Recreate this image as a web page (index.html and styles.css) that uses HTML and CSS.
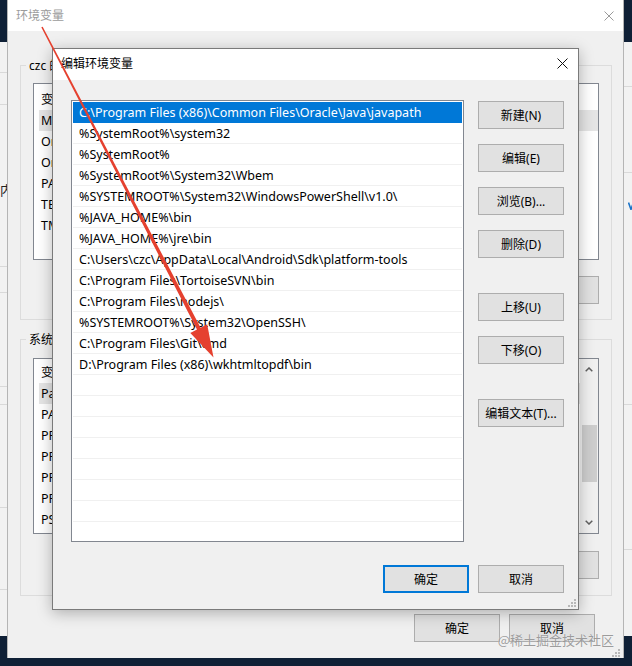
FILE: index.html
```html
<!DOCTYPE html>
<html lang="zh-CN">
<head>
<meta charset="utf-8">
<title>编辑环境变量</title>
<link rel="stylesheet" href="styles.css">
</head>
<body>
<div class="desktop">

  <div class="back-window">
    <div class="bw-col bw-left">
      <div class="bw-seg"></div>
      <div class="bw-seg"></div>
      <div class="bw-seg bw-text">内</div>
      <div class="bw-seg"></div>
      <div class="bw-seg"></div>
      <div class="bw-seg"></div>
      <div class="bw-seg"></div>
      <div class="bw-seg"></div>
      <div class="bw-seg bw-last"></div>
    </div>
    <div class="bw-col bw-right">
      <div class="bw-seg"></div>
      <div class="bw-seg"></div>
      <div class="bw-seg bw-mark"><svg width="6" height="8" viewBox="0 0 6 8"><path d="M0.5 0.5 L3 7.5 L5.5 0.5" fill="none" stroke="#1a73c8" stroke-width="1.6"/></svg></div>
      <div class="bw-seg"></div>
      <div class="bw-seg bw-last"></div>
    </div>
  </div>

  <div class="window env-window">
    <div class="titlebar env-titlebar">
      <span class="title title-inactive">环境变量</span>
      <svg class="close" width="10" height="10" viewBox="0 0 10 10"><path d="M0.5 0.5 L9.5 9.5 M9.5 0.5 L0.5 9.5" stroke="#9a9a9a" stroke-width="1"/></svg>
    </div>
    <div class="env-body">
      <fieldset class="group group-user">
        <legend>czc 的用户变量(U)</legend>
        <div class="listview lv-user">
          <div class="lv-rows">
            <div class="lv-row lv-head"><span class="lv-c1">变量</span><span>值</span></div>
            <div class="lv-row lv-sel"><span class="lv-c1">MAVEN_HOME</span><span>D:\apache-maven-3.6.3</span></div>
            <div class="lv-row"><span class="lv-c1">OneDrive</span><span>C:\Users\czc\OneDrive</span></div>
            <div class="lv-row"><span class="lv-c1">OneDriveConsumer</span><span>C:\Users\czc\OneDrive</span></div>
            <div class="lv-row"><span class="lv-c1">PATH</span><span>C:\Users\czc\AppData\Local\Microsoft\WindowsApps;</span></div>
            <div class="lv-row"><span class="lv-c1">TEMP</span><span>C:\Users\czc\AppData\Local\Temp</span></div>
            <div class="lv-row"><span class="lv-c1">TMP</span><span>C:\Users\czc\AppData\Local\Temp</span></div>
          </div>
        </div>
        <div class="btn-row">
          <button class="btn">新建(N)...</button>
          <button class="btn">编辑(E)...</button>
          <button class="btn">删除(D)</button>
        </div>
      </fieldset>

      <fieldset class="group group-sys">
        <legend>系统变量(S)</legend>
        <div class="listview lv-sys">
          <div class="lv-rows">
            <div class="lv-row lv-head"><span class="lv-c1">变量</span><span>值</span></div>
            <div class="lv-row lv-sel"><span class="lv-c1">Path</span><span>C:\Program Files (x86)\Common Files\Oracle\Java\javapath</span></div>
            <div class="lv-row"><span class="lv-c1">PATHEXT</span><span>.COM;.EXE;.BAT;.CMD;.VBS;.VBE;.JS</span></div>
            <div class="lv-row"><span class="lv-c1">PROCESSOR_ARCHITECTURE</span><span>AMD64</span></div>
            <div class="lv-row"><span class="lv-c1">PROCESSOR_IDENTIFIER</span><span>Intel64 Family 6</span></div>
            <div class="lv-row"><span class="lv-c1">PROCESSOR_LEVEL</span><span>6</span></div>
            <div class="lv-row"><span class="lv-c1">PROCESSOR_REVISION</span><span>9e0a</span></div>
            <div class="lv-row"><span class="lv-c1">PSModulePath</span><span>%ProgramFiles%\WindowsPowerShell\Modules</span></div>
          </div>
          <div class="scrollbar">
            <div class="sb-btn"><svg width="8" height="5" viewBox="0 0 8 5"><path d="M0.7 4.3 L4 1 L7.3 4.3" fill="none" stroke="#606060" stroke-width="1.5"/></svg></div>
            <div class="sb-track"><div class="sb-thumb"></div></div>
            <div class="sb-btn"><svg width="8" height="5" viewBox="0 0 8 5"><path d="M0.7 0.7 L4 4 L7.3 0.7" fill="none" stroke="#606060" stroke-width="1.5"/></svg></div>
          </div>
        </div>
        <div class="btn-row btn-row-sys">
          <button class="btn">新建(W)...</button>
          <button class="btn">编辑(I)...</button>
          <button class="btn">删除(L)</button>
        </div>
      </fieldset>

      <div class="dlg-footer env-footer">
        <button class="btn">确定</button>
        <button class="btn">取消</button>
      </div>
    </div>
    <svg class="grip env-grip" width="8" height="8" viewBox="0 0 8 8"><g fill="#b8b8b8"><rect x="6" y="0" width="2" height="2"/><rect x="3" y="3" width="2" height="2"/><rect x="6" y="3" width="2" height="2"/><rect x="0" y="6" width="2" height="2"/><rect x="3" y="6" width="2" height="2"/><rect x="6" y="6" width="2" height="2"/></g></svg>
  </div>

  <div class="window edit-window">
    <div class="titlebar edit-titlebar">
      <span class="title">编辑环境变量</span>
      <svg class="close" width="11" height="11" viewBox="0 0 11 11"><path d="M0.5 0.5 L10.5 10.5 M10.5 0.5 L0.5 10.5" stroke="#111" stroke-width="1"/></svg>
    </div>
    <div class="edit-body">
      <div class="edit-main">
        <div class="pathlist">
          <div class="path-row path-sel">C:\Program Files (x86)\Common Files\Oracle\Java\javapath</div>
          <div class="path-row">%SystemRoot%\system32</div>
          <div class="path-row">%SystemRoot%</div>
          <div class="path-row">%SystemRoot%\System32\Wbem</div>
          <div class="path-row">%SYSTEMROOT%\System32\WindowsPowerShell\v1.0\</div>
          <div class="path-row">%JAVA_HOME%\bin</div>
          <div class="path-row">%JAVA_HOME%\jre\bin</div>
          <div class="path-row">C:\Users\czc\AppData\Local\Android\Sdk\platform-tools</div>
          <div class="path-row">C:\Program Files\TortoiseSVN\bin</div>
          <div class="path-row">C:\Program Files\nodejs\</div>
          <div class="path-row">%SYSTEMROOT%\System32\OpenSSH\</div>
          <div class="path-row">C:\Program Files\Git\cmd</div>
          <div class="path-row">D:\Program Files (x86)\wkhtmltopdf\bin</div>
          <div class="path-row"></div>
          <div class="path-row"></div>
          <div class="path-row"></div>
          <div class="path-row"></div>
          <div class="path-row"></div>
          <div class="path-row"></div>
          <div class="path-row"></div>
          <div class="path-row"></div>
        </div>
        <div class="side-buttons">
          <button class="btn">新建(N)</button>
          <button class="btn">编辑(E)</button>
          <button class="btn">浏览(B)...</button>
          <button class="btn">删除(D)</button>
          <button class="btn btn-sep">上移(U)</button>
          <button class="btn">下移(O)</button>
          <button class="btn btn-sep">编辑文本(T)...</button>
        </div>
      </div>
      <div class="dlg-footer edit-footer">
        <button class="btn btn-default">确定</button>
        <button class="btn">取消</button>
      </div>
    </div>
    <svg class="grip edit-grip" width="8" height="8" viewBox="0 0 8 8"><g fill="#b8b8b8"><rect x="6" y="0" width="2" height="2"/><rect x="3" y="3" width="2" height="2"/><rect x="6" y="3" width="2" height="2"/><rect x="0" y="6" width="2" height="2"/><rect x="3" y="6" width="2" height="2"/><rect x="6" y="6" width="2" height="2"/></g></svg>
  </div>

  <svg class="arrow" width="632" height="666" viewBox="0 0 632 666">
    <polygon fill="#e5412f" points="42.7,26.7 200.6,327.7 207.2,324.2 213.5,357.5 190.3,333 197,329.5 41.3,27.3"/>
  </svg>

  <div class="watermark">@稀土掘金技术社区</div>
</div>
</body>
</html>
```

FILE: styles.css
```css
* { box-sizing: border-box; }

html, body {
  margin: 0;
  padding: 0;
}

body {
  width: 632px;
  height: 666px;
  overflow: hidden;
  background: #0f2036;
  font-family: "Noto Sans", "Noto Sans CJK SC", sans-serif;
  font-size: 12px;
  color: #000;
}

.desktop {
  position: relative;
  width: 632px;
  height: 666px;
  overflow: hidden;
  background: #0f2036;
}

/* ---------- window behind ---------- */
.back-window {
  position: absolute;
  left: 0;
  top: 42px;
  width: 632px;
  height: 594px;
  background: #f2f2f2;
  display: flex;
  justify-content: space-between;
}

.bw-col {
  display: grid;
  height: 100%;
}

.bw-left {
  width: 7px;
  grid-template-rows: 31px 32px 162px 26px 94px 18px 103px 82px 1fr;
}

.bw-right {
  width: 8px;
  grid-template-rows: 45px 86px 232px 145px 1fr;
}

.bw-seg {
  border-bottom: 1px solid #d9d9d9;
  overflow: visible;
}

.bw-last { border-bottom: none; }

.bw-text {
  font-size: 13px;
  line-height: 16px;
  padding-top: 77px;
  white-space: nowrap;
  color: #222;
}

.bw-mark {
  padding: 29px 0 0 4px;
  overflow: hidden;
}

.bw-mark svg { display: block; }

/* ---------- generic window ---------- */
.window {
  position: absolute;
  display: flex;
  flex-direction: column;
  background: #f0f0f0;
}

.titlebar {
  height: 31px;
  flex: none;
  background: #fff;
  display: flex;
  align-items: center;
  justify-content: space-between;
  padding-left: 8px;
}

.title {
  font-size: 12px;
  line-height: 16px;
  white-space: nowrap;
}

.title-inactive { color: #9b9b9b; }

.close { display: block; }

.grip {
  position: absolute;
  display: block;
}

/* ---------- buttons ---------- */
.btn {
  font: inherit;
  font-size: 12px;
  width: 86px;
  height: 28px;
  padding: 0;
  margin: 0;
  background: #e1e1e1;
  border: 1px solid #adadad;
  color: #000;
  white-space: nowrap;
  flex: none;
}

.btn-default {
  border: 2px solid #0078d7;
}

/* ---------- environment variables window ---------- */
.env-window {
  left: 7px;
  top: 0;
  width: 617px;
  height: 658px;
  border-left: 1px solid #b5b5b5;
  border-right: 1px solid #b5b5b5;
}

.env-titlebar { padding-right: 9px; }

.env-body {
  flex: 1;
  display: flex;
  flex-direction: column;
  padding: 0 11px 0 12px;
}

.group {
  margin: 0;
  border: 1px solid #dcdcdc;
  padding: 0 12px 0 12px;
  min-width: 0;
}

.group legend {
  font-size: 12px;
  line-height: 15px;
  padding: 0 3px;
  margin-left: -7px;
  white-space: nowrap;
}

.group-user {
  margin-top: 27px;
  padding-bottom: 15px;
}

.group-sys {
  margin-top: 12px;
  padding-bottom: 16px;
}

.listview {
  background: #fff;
  border: 1px solid #828790;
  display: flex;
  overflow: hidden;
}

.lv-user {
  margin-top: 10px;
  height: 177px;
}

.lv-sys {
  margin-top: 11px;
  height: 176px;
}

.lv-rows {
  flex: 1;
  min-width: 0;
}

.lv-user .lv-rows { padding-top: 6px; }
.lv-sys .lv-rows { padding-top: 4px; }

.lv-row {
  height: 21px;
  line-height: 21px;
  font-size: 12.5px;
  margin-left: 5px;
  padding-left: 2px;
  display: flex;
  white-space: nowrap;
}

.lv-head {
  height: 20px;
  line-height: 20px;
}

.lv-sel { background: #e5e5e5; }

.lv-c1 {
  width: 190px;
  flex: none;
}

.scrollbar {
  width: 18px;
  flex: none;
  background: #f0f0f0;
  display: flex;
  flex-direction: column;
}

.sb-btn {
  height: 21px;
  display: flex;
  align-items: center;
  justify-content: center;
  flex: none;
}

.sb-btn svg { display: block; }

.sb-track {
  flex: 1;
  padding: 45px 1px 0 2px;
}

.sb-thumb {
  height: 57px;
  background: #cdcdcd;
}

.btn-row {
  display: flex;
  justify-content: flex-end;
  gap: 9px;
  margin-top: 16px;
}

.btn-row-sys { margin-top: 17px; }

.dlg-footer {
  display: flex;
  justify-content: flex-end;
  gap: 9px;
}

.env-footer {
  margin-top: 18px;
  margin-right: 17px;
}

.env-grip {
  right: 3px;
  bottom: 1px;
}

/* ---------- edit dialog ---------- */
.edit-window {
  left: 52px;
  top: 48px;
  width: 527px;
  height: 562px;
  border: 1px solid #7a7a7a;
  box-shadow: 0 3px 14px rgba(0, 0, 0, 0.28);
}

.edit-titlebar {
  padding-right: 10px;
  padding-bottom: 2px;
}

.edit-body {
  flex: 1;
  display: flex;
  flex-direction: column;
  padding: 20px 14px 16px 18px;
}

.edit-main {
  display: flex;
  gap: 14px;
  height: 442px;
}

.pathlist {
  width: 393px;
  height: 442px;
  flex: none;
  background: #fff;
  border: 1px solid #828790;
  padding: 1px;
  overflow: hidden;
}

.path-row {
  height: 21px;
  line-height: 21px;
  font-size: 12.5px;
  padding-left: 6px;
  border-bottom: 1px solid #f0f0f0;
  white-space: nowrap;
  overflow: hidden;
}

.path-sel {
  background: #0078d7;
  border-bottom-color: #0078d7;
  color: #fff;
}

.side-buttons {
  display: flex;
  flex-direction: column;
  gap: 15px;
  padding-top: 1px;
}

.btn-sep { margin-top: 20px; }

.edit-footer { margin-top: 23px; }

.edit-grip {
  right: 2px;
  bottom: 2px;
}

/* ---------- overlays ---------- */
.arrow {
  position: absolute;
  left: 0;
  top: 0;
  pointer-events: none;
}

.watermark {
  position: absolute;
  right: 18px;
  top: 631px;
  font-family: "Noto Sans CJK SC", sans-serif;
  font-size: 13px;
  line-height: 18px;
  color: rgba(140, 140, 140, 0.85);
  text-shadow: 0 0 1px rgba(255, 255, 255, 0.7);
  white-space: nowrap;
  pointer-events: none;
}
```
